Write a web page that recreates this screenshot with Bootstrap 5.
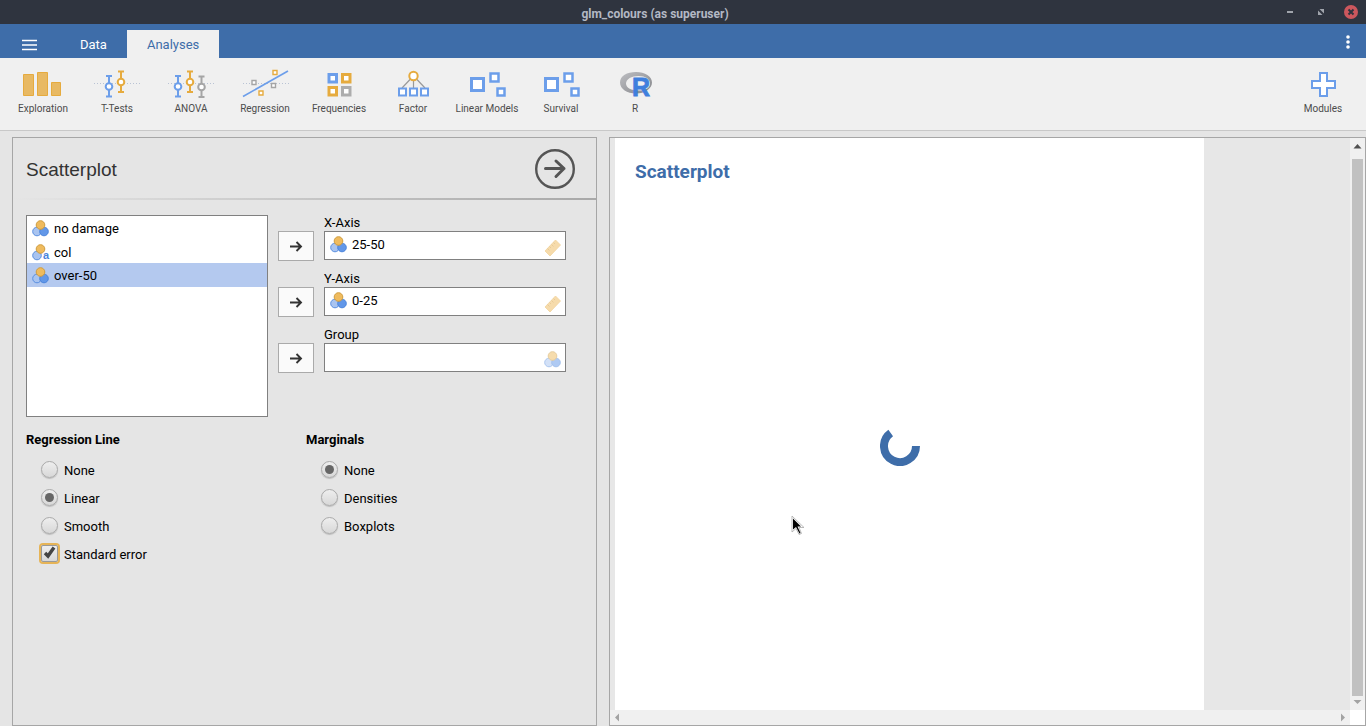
<!DOCTYPE html>
<html lang="en">
<head>
<meta charset="utf-8">
<meta name="viewport" content="width=device-width, initial-scale=1">
<title>glm_colours (as superuser)</title>
<link href="https://cdn.jsdelivr.net/npm/bootstrap@5.3.0/dist/css/bootstrap.min.css" rel="stylesheet">
<style>
  body { font-family: Roboto, "Liberation Sans", sans-serif; font-size: 13px; line-height: 16px; color: #000; background: #e5e5e5; }
  svg { display: block; flex: none; }
  button { color: inherit; }

  .titlebar { height: 24px; background: #2f343f; color: #b3b8c4; }
  .titlebar h1 { font-size: 12px; line-height: 24px; font-weight: 700; padding: 2px 56px 0 0; }
  .win-controls { top: 0; right: 8px; height: 24px; gap: 19px; }
  .plain-btn { border: 0; background: none; padding: 0; }

  .menubar { height: 34px; background: #3e6da9; color: #fff; }
  .menubar .burger { width: 60px; padding-left: 22px; padding-top: 8px; }
  .menubar .nav-link { height: 28px; line-height: 28px; padding: 1px 20px 0; font-size: 13px; color: #fff; border-radius: 0; }
  .menubar .nav-link.active { background: #f0f0f0; color: #3e6da9; }
  .menubar .dots { width: 36px; padding-top: 2px; }

  .ribbon { height: 73px; background: #f0f0f0; border-bottom: 1px solid #c8c8c8; padding: 0 6px; }
  .tool { width: 74px; padding-top: 10px; gap: 1px; font-size: 10px; color: #4c4c4c; white-space: nowrap; }

  .workspace { display: grid; grid-template-columns: 585fr 757fr; column-gap: 12px; padding: 6px 0 0 12px; min-height: 0; }
  .pane { border: 1px solid #a6a6a6; min-width: 0; }

  .pane-head { height: 60px; padding: 2px 21px 0 13px; }
  .pane-head h2 { font: 19px/24px "Liberation Sans", sans-serif; color: #333; padding-top: 1px; }
  .rule { height: 2px; background: linear-gradient(to right, #e5e5e5, #a8a8a8); }
  .pane-body { padding: 15px 30px 0 13px; }

  .var-list { width: 242px; height: 202px; background: #fff; border: 1px solid #808080; border-radius: 0; }
  .var-list .list-group-item { height: 24px; padding: 2px 5px 0; margin: 0; border: 0; border-radius: 0; color: #000; background: none; gap: 4px; }
  .var-list .list-group-item.active { background: #b4c9ef; }
  .targets { gap: 10px; }
  .target { gap: 10px; height: 46px; }
  .assign { width: 36px; height: 30px; margin-top: 16px; background: #fafafa; border: 1px solid #aaa; }
  .slot-box { width: 242px; height: 29px; background: #fff; border: 1px solid #808080; padding: 0 3px 2px 5px; gap: 4px; }
  .slot-box input { border: 0; background: none; padding: 0; min-width: 0; color: #000; outline: 0; height: 24px; }
  .faded { opacity: .5; margin-top: 6px; }

  .opts { margin-top: 15px; }
  .opts fieldset { width: 280px; flex-shrink: 0; }
  .opts fieldset + fieldset { flex-shrink: 1; }
  .opts legend { font-size: 13px; line-height: 16px; font-weight: 700; margin-bottom: 8px; }
  .opt { height: 28px; padding-left: 15px; }
  .opt input { appearance: none; width: 17px; height: 17px; margin: 0 0 2px; border: 1px solid #aaa; background: linear-gradient(#eee, #d8d8d8); display: grid; place-items: center; }
  .opt input[type=radio] { border-radius: 50%; box-shadow: 0 1px 1px #bbb; }
  .opt input[type=radio]:checked::before { content: ""; width: 9px; height: 9px; border-radius: 50%; background: #666; }
  .opt input[type=checkbox] { border-radius: 2px; box-shadow: 0 0 0 2px #e6b457; border-color: #999; }
  .opt label { padding-left: 6px; padding-top: 2px; }
  .tick { left: 17px; top: 5px; pointer-events: none; }

  .results { display: grid; grid-template: minmax(0, 1fr) 15px / minmax(0, 1fr) 15px; background: #e7e7e7; }
  .sheet { width: 79.6%; margin-left: 5px; background: #fff; padding: 21px 40px 2px 20px; }
  .sheet h2 { font-size: 19px; line-height: 25px; font-weight: 700; color: #3e6da9; }
  .pointer { left: 176px; top: 377px; }
  .scroll-track { background: #f0f0f0; }
  .thumb { width: 11px; background: #c1c1c1; }
</style>
</head>
<body class="vh-100 d-flex flex-column overflow-hidden">

<svg width="0" height="0" class="position-absolute" aria-hidden="true">
  <defs>
    <g id="nominal" stroke-width="1">
      <circle cx="5" cy="11.5" r="4.3" fill="#a9c4f0" stroke="#5a8fe0"/>
      <circle cx="12" cy="11.5" r="4.3" fill="#6297e8" stroke="#4a84dc"/>
      <circle cx="8.500" cy="5" r="4.300" fill="#efbb5e" stroke="#cf9c3e"/>
    </g>
    <g id="ruler">
      <path d="M1 12 L11.500 1 L16.500 6 L6 17 Z" fill="#efb85a" stroke="#e6a93c" stroke-width=".8"/>
      <path d="M3.500 9.500l2 2M5.500 7.500l1.500 1.500M7.500 5.500l2 2M9.500 3.500l1.500 1.500" stroke="#cf9530" stroke-width=".9"/>
    </g>
    <g id="arrow" fill="none" stroke="#333" stroke-width="1.900"><path d="M0 6.500H11M6.500 2L11 6.500L6.500 11"/></g>
    <g id="models" fill="#fff" stroke="#6c9eea" stroke-width="3">
      <path d="M8.500 10.500h12v12h-12z"/><path d="M27.500 5.500h8v8h-8z" stroke-width="2.500"/><path d="M34.500 20.500h7v7h-7z" stroke-width="2.500"/>
    </g>
  </defs>
</svg>

<header class="titlebar position-relative text-center">
  <h1 class="m-0">glm_colours (as superuser)</h1>
  <div class="win-controls position-absolute d-flex align-items-center">
    <button class="plain-btn me-1" aria-label="Minimise"><svg width="8" height="14"><path d="M1 7h6" stroke="#a0a4ac" stroke-width="2"/></svg></button>
    <button class="plain-btn" aria-label="Restore"><svg width="8" height="14"><path d="M2.500 4H7V8.500ZM1 5.500V10H5.500Z" fill="#a0a4ac"/></svg></button>
    <button class="plain-btn" aria-label="Close"><svg width="14" height="14"><circle cx="7" cy="7" r="7" fill="#cc575d"/><path d="M4.500 4.500l5 5M9.500 4.500l-5 5" stroke="#2f343f" stroke-width="2"/></svg></button>
  </div>
</header>

<nav class="menubar d-flex align-items-end">
  <button class="plain-btn burger align-self-stretch" aria-label="Menu"><svg width="15" height="12"><path d="M0 1.500h15M0 6h15M0 10.500h15" stroke="#fff" stroke-width="1.400"/></svg></button>
  <div class="nav">
    <a class="nav-link" href="#">Data</a>
    <a class="nav-link active" href="#" aria-current="page">Analyses</a>
  </div>
  <button class="plain-btn dots ms-auto align-self-stretch d-flex justify-content-center align-items-center" aria-label="More"><svg width="4" height="14"><g fill="#fff"><circle cx="2" cy="2" r="1.800"/><circle cx="2" cy="7" r="1.800"/><circle cx="2" cy="12" r="1.800"/></g></svg></button>
</nav>

<div class="ribbon d-flex flex-shrink-0" role="toolbar" aria-label="Analyses">
  <button class="plain-btn tool d-flex flex-column align-items-center"><svg width="48" height="32"><g fill="#e8b963" stroke="#e6ab3e"><path d="M4.500 6.500h10v21h-10zM18.500 4.500h10v23h-10zM32.500 14.500h9v13h-9z"/></g></svg>Exploration</button>
  <button class="plain-btn tool d-flex flex-column align-items-center"><svg width="48" height="32"><path d="M1 15.500H47" stroke="#b9c3d4" stroke-dasharray="1 2"/><g fill="none" stroke-width="2"><path d="M16 8V28M13 8h6M13 28.500h6" stroke="#6c9eea"/><circle cx="16" cy="18.500" r="3.300" fill="#fff" stroke="#6c9eea"/><path d="M28 4V24M25 3.500h6M25 24h6" stroke="#e6ab3e"/><circle cx="28" cy="14" r="3.300" fill="#fff" stroke="#e6ab3e"/></g></svg>T-Tests</button>
  <button class="plain-btn tool d-flex flex-column align-items-center"><svg width="48" height="32"><path d="M1 15.500H47" stroke="#b9c3d4" stroke-dasharray="1 2"/><g fill="none" stroke-width="2"><path d="M11 8V28M8 8h6M8 28.500h6" stroke="#6c9eea"/><circle cx="11" cy="18.500" r="3.300" fill="#fff" stroke="#6c9eea"/><path d="M23 4V24M20 3.500h6M20 24h6" stroke="#e6ab3e"/><circle cx="23" cy="14" r="3.300" fill="#fff" stroke="#e6ab3e"/><path d="M34.500 8.500V29M31.500 8.500h6M31.500 29h6" stroke="#a5a5a5"/><circle cx="34.500" cy="19" r="3.300" fill="#fff" stroke="#a5a5a5"/></g></svg>ANOVA</button>
  <button class="plain-btn tool d-flex flex-column align-items-center"><svg width="48" height="32"><path d="M2 15.500H48" stroke="#b9c3d4" stroke-dasharray="1 2"/><path d="M2 28.500L47 3" stroke="#6c9eea" stroke-width="1.600"/><g fill="#fff" stroke-width="1.400"><path d="M11 12.500h4v4h-4zM30.500 15.500h4v4h-4z" stroke="#a5a5a5"/><path d="M18 23h4v4h-4zM32 2.500h4v4h-4z" stroke="#e6ab3e"/></g></svg>Regression</button>
  <button class="plain-btn tool d-flex flex-column align-items-center"><svg width="48" height="32"><g fill="#fff" stroke-width="3"><path d="M14 6.500h7.500v7.500h-7.500z" stroke="#6c9eea"/><path d="M27.500 6.500h7.500v7.500h-7.500zM14 19.500h7.500v7.500h-7.500z" stroke="#e6ab3e"/><path d="M27.500 19.500h7.500v7.500h-7.500z" stroke="#adadad"/></g></svg>Frequencies</button>
  <button class="plain-btn tool d-flex flex-column align-items-center"><svg width="48" height="32"><path d="M21.500 11L13 20M24.500 12V20M27.500 11L36 20" stroke="#999" stroke-width="1.200"/><g fill="#fff" stroke="#6c9eea" stroke-width="2"><circle cx="24.500" cy="8" r="4.200" stroke="#e6ab3e"/><path d="M10 20.500h7v7h-7zM21 20.500h7v7h-7zM32 20.500h7v7h-7z"/></g></svg>Factor</button>
  <button class="plain-btn tool d-flex flex-column align-items-center"><svg width="48" height="32"><use href="#models"/></svg>Linear Models</button>
  <button class="plain-btn tool d-flex flex-column align-items-center"><svg width="48" height="32"><use href="#models"/></svg>Survival</button>
  <button class="plain-btn tool d-flex flex-column align-items-center"><svg width="48" height="32"><defs><linearGradient id="ring" x2="1" y2="1"><stop stop-color="#bdbec2"/><stop offset="1" stop-color="#85868a"/></linearGradient></defs><path fill="url(#ring)" fill-rule="evenodd" d="M25 4C34 4 41 8.500 41 14.500S34 25.500 25 25.500S9 21 9 14.500S16 4 25 4ZM27.500 8C20.500 8 15 11 15 15.500S20.500 22.500 27.500 22.500S39 20 39 15.500S34.500 8 27.500 8Z"/><text x="21" y="28" font-family="Liberation Sans, sans-serif" font-size="25" font-weight="700" fill="#3f7fdd" stroke="#3f7fdd" stroke-width=".8">R</text></svg>R</button>
  <button class="plain-btn tool d-flex flex-column align-items-center ms-auto"><svg width="48" height="32"><path d="M21 5h7v8h8v7h-8v8h-7v-8h-8v-7h8z" fill="#fff" stroke="#6c9eea" stroke-width="2"/></svg>Modules</button>
</div>

<main class="workspace flex-grow-1">
  <section class="pane">
    <div class="pane-head d-flex align-items-center justify-content-between">
      <h2 class="m-0">Scatterplot</h2>
      <button class="plain-btn" aria-label="Close options"><svg width="40" height="40" viewBox="0 0 40 40"><g fill="none" stroke="#555"><circle cx="20" cy="20" r="18.800" stroke-width="2.400"/><path d="M10.500 19.500H29M21 12L29 19.500L21 27.500" stroke-width="3" stroke-linecap="round" stroke-linejoin="round"/></g></svg></button>
    </div>
    <div class="rule"></div>
    <div class="pane-body">
      <div class="d-flex targets">
        <div class="list-group var-list">
          <button class="list-group-item d-flex align-items-center"><svg width="18" height="18"><use href="#nominal"/></svg><span>no damage</span></button>
          <button class="list-group-item d-flex align-items-center"><svg width="18" height="18"><circle cx="5" cy="11.500" r="4.300" fill="#a9c4f0" stroke="#5a8fe0"/><circle cx="8.500" cy="5" r="4.300" fill="#efbb5e" stroke="#cf9c3e"/><text x="11" y="15" font-family="Liberation Sans, sans-serif" font-size="11" font-weight="700" fill="#4a84dc">a</text></svg><span>col</span></button>
          <button class="list-group-item active d-flex align-items-center"><svg width="18" height="18"><use href="#nominal"/></svg><span>over-50</span></button>
        </div>
        <div class="d-flex flex-column targets">
          <div class="target d-flex">
            <button class="assign d-flex align-items-center justify-content-center p-0" aria-label="Assign to X-Axis"><svg width="13" height="12"><use href="#arrow"/></svg></button>
            <div><label class="d-block" for="xaxis">X-Axis</label>
              <div class="slot-box d-flex align-items-center"><svg width="18" height="18"><use href="#nominal"/></svg><input id="xaxis" class="flex-grow-1" type="text" value="25-50" readonly><svg class="faded" width="18" height="18"><use href="#ruler"/></svg></div></div>
          </div>
          <div class="target d-flex">
            <button class="assign d-flex align-items-center justify-content-center p-0" aria-label="Assign to Y-Axis"><svg width="13" height="12"><use href="#arrow"/></svg></button>
            <div><label class="d-block" for="yaxis">Y-Axis</label>
              <div class="slot-box d-flex align-items-center"><svg width="18" height="18"><use href="#nominal"/></svg><input id="yaxis" class="flex-grow-1" type="text" value="0-25" readonly><svg class="faded" width="18" height="18"><use href="#ruler"/></svg></div></div>
          </div>
          <div class="target d-flex">
            <button class="assign d-flex align-items-center justify-content-center p-0" aria-label="Assign to Group"><svg width="13" height="12"><use href="#arrow"/></svg></button>
            <div><label class="d-block" for="group">Group</label>
              <div class="slot-box d-flex align-items-center"><input id="group" class="flex-grow-1" type="text" readonly><svg class="faded" width="18" height="18"><use href="#nominal"/></svg></div></div>
          </div>
        </div>
      </div>

      <div class="opts d-flex">
        <fieldset>
          <legend>Regression Line</legend>
          <div class="opt d-flex align-items-center"><input type="radio" name="line" id="l-none"><label for="l-none">None</label></div>
          <div class="opt d-flex align-items-center"><input type="radio" name="line" id="l-linear" checked><label for="l-linear">Linear</label></div>
          <div class="opt d-flex align-items-center"><input type="radio" name="line" id="l-smooth"><label for="l-smooth">Smooth</label></div>
          <div class="opt d-flex align-items-center position-relative"><input type="checkbox" id="se" checked><label for="se">Standard error</label><svg class="tick position-absolute" width="13" height="14"><path d="M2 8L5 11L11 2.500" fill="none" stroke="#444" stroke-width="3.400"/></svg></div>
        </fieldset>
        <fieldset>
          <legend>Marginals</legend>
          <div class="opt d-flex align-items-center"><input type="radio" name="marg" id="m-none" checked><label for="m-none">None</label></div>
          <div class="opt d-flex align-items-center"><input type="radio" name="marg" id="m-dens"><label for="m-dens">Densities</label></div>
          <div class="opt d-flex align-items-center"><input type="radio" name="marg" id="m-box"><label for="m-box">Boxplots</label></div>
        </fieldset>
      </div>
    </div>
  </section>

  <section class="pane results">
    <div class="sheet d-flex flex-column position-relative">
      <h2 class="m-0">Scatterplot</h2>
      <div class="flex-grow-1 d-flex align-items-center justify-content-center" role="status" aria-label="Running">
        <svg width="40" height="40" viewBox="-20 -20 40 40"><path d="M16 0A16 16 0 1 1 -9.300 -13" fill="none" stroke="#3e6da9" stroke-width="8"/></svg>
      </div>
      <svg class="pointer position-absolute" width="16" height="22"><path d="M1 1V17L5 13.500L8 19.500L10.500 18.500L8 12.500H13Z" fill="#fff" stroke="#aaa" stroke-width=".8"/><path d="M2 3.500V14.500L5 12L8.500 18.500L9.500 18L6.500 11.500H10Z" fill="#000"/></svg>
    </div>
    <div class="scroll-track d-flex flex-column align-items-center">
      <svg width="15" height="21"><path d="M3.500 10.500L7.500 6L11.500 10.500Z" fill="#505050"/></svg>
      <div class="thumb flex-grow-1"></div>
      <svg width="15" height="14"><path d="M3.500 4L7.500 8L11.500 4Z" fill="#a3a3a3"/></svg>
    </div>
    <div class="scroll-track d-flex justify-content-between">
      <svg width="15" height="15"><path d="M9 3.500L5 7.500L9 11.500Z" fill="#a3a3a3"/></svg>
      <svg width="15" height="15"><path d="M6 3.500L10 7.500L6 11.500Z" fill="#a3a3a3"/></svg>
    </div>
    <div class="bg-white"></div>
  </section>
</main>
<script src="https://cdn.jsdelivr.net/npm/bootstrap@5.3.0/dist/js/bootstrap.bundle.min.js"></script>
</body>
</html>
